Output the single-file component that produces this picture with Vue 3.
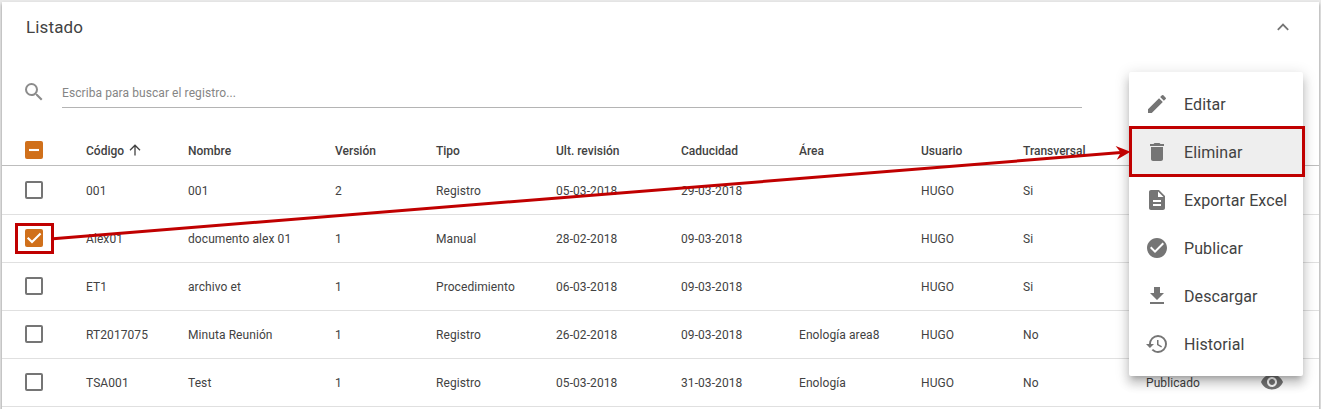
<script setup>
const columns = ['Código', 'Nombre', 'Versión', 'Tipo', 'Ult. revisión', 'Caducidad', 'Área', 'Usuario', 'Transversal', '']

const rows = [
  { checked: false, cells: ['001', '001', '2', 'Registro', '05-03-2018', '29-03-2018', '', 'HUGO', 'Si', ''] },
  { checked: true, cells: ['Alex01', 'documento alex 01', '1', 'Manual', '28-02-2018', '09-03-2018', '', 'HUGO', 'Si', ''] },
  { checked: false, cells: ['ET1', 'archivo et', '1', 'Procedimiento', '06-03-2018', '09-03-2018', '', 'HUGO', 'Si', ''] },
  { checked: false, cells: ['RT2017075', 'Minuta Reunión', '1', 'Registro', '26-02-2018', '09-03-2018', 'Enología area8', 'HUGO', 'No', ''] },
  { checked: false, cells: ['TSA001', 'Test', '1', 'Registro', '05-03-2018', '31-03-2018', 'Enología', 'HUGO', 'No', 'Publicado'] },
]

const menu = [
  { label: 'Editar', path: 'M3 17.25V21h3.75L17.81 9.94l-3.75-3.75L3 17.25zM20.71 7.04a1 1 0 0 0 0-1.41l-2.34-2.34a1 1 0 0 0-1.41 0l-1.83 1.83 3.75 3.75 1.83-1.83z' },
  { label: 'Eliminar', active: true, path: 'M6 19c0 1.1.9 2 2 2h8c1.1 0 2-.9 2-2V7H6v12zM19 4h-3.5l-1-1h-5l-1 1H5v2h14V4z' },
  { label: 'Exportar Excel', path: 'M14 2H6c-1.1 0-1.99.9-1.99 2L4 20c0 1.1.89 2 1.99 2H18c1.1 0 2-.9 2-2V8l-6-6zm2 16H8v-2h8v2zm0-4H8v-2h8v2zm-3-5V3.500L18.500 9H13z' },
  { label: 'Publicar', path: 'M12 2C6.480 2 2 6.480 2 12s4.480 10 10 10 10-4.480 10-10S17.520 2 12 2zm-2 15l-5-5 1.410-1.410L10 14.170l7.590-7.590L19 8l-9 9z' },
  { label: 'Descargar', path: 'M19 9h-4V3H9v6H5l7 7 7-7zM5 18v2h14v-2H5z' },
  { label: 'Historial', path: 'M13 3a9 9 0 0 0-9 9H1l3.890 3.890.07.14L9 12H6c0-3.870 3.130-7 7-7s7 3.130 7 7-3.130 7-7 7c-1.930 0-3.680-.79-4.940-2.060l-1.420 1.420A8.954 8.954 0 0 0 13 21a9 9 0 0 0 0-18zm-1 5v5l4.280 2.540.72-1.210-3.500-2.080V8H12z' },
]
</script>

<template>
  <div class="page">
    <section class="card">
      <header class="title-bar">
        <h1>Listado</h1>
        <svg class="chevron" viewBox="0 0 12 8"><path d="M.8 6.800 6 1.600l5.200 5.200" /></svg>
      </header>

      <div class="search">
        <svg class="icon search-icon" viewBox="0 0 24 24"><path d="M15.500 14h-.79l-.28-.27A6.471 6.471 0 0 0 16 9.500 6.500 6.500 0 1 0 9.500 16c1.610 0 3.090-.59 4.230-1.570l.27.28v.79l5 4.990L20.490 19l-4.990-5zm-6 0C7.010 14 5 11.990 5 9.500S7.010 5 9.500 5 14 7.010 14 9.500 11.990 14 9.500 14z" /></svg>
        <div class="search-field">Escriba para buscar el registro...</div>
      </div>

      <div class="table">
        <div class="row head">
          <div class="box-cell"><span class="box filled"><svg viewBox="0 0 18 18"><path d="M4 9h10" /></svg></span></div>
          <div v-for="(name, i) in columns" :key="i" class="cell">
            {{ name }}
            <svg v-if="i === 0" class="sort" viewBox="0 0 12 12"><path d="M6 11.500V1.200M1 6.200l5-5 5 5" /></svg>
          </div>
        </div>
        <div v-for="row in rows" :key="row.cells[0]" class="row">
          <div class="box-cell">
            <span class="box" :class="{ filled: row.checked }">
              <svg v-if="row.checked" viewBox="0 0 18 18"><path d="M2.700 8.800 7 13.100l8.600-8.600" /></svg>
            </span>
          </div>
          <div v-for="(value, i) in row.cells" :key="i" class="cell">{{ value }}</div>
          <svg class="icon eye" viewBox="0 0 24 24"><path d="M12 4.500C7 4.500 2.730 7.610 1 12c1.730 4.390 6 7.500 11 7.500s9.270-3.110 11-7.500c-1.730-4.390-6-7.500-11-7.500zM12 17c-2.760 0-5-2.240-5-5s2.240-5 5-5 5 2.240 5 5-2.240 5-5 5zm0-8c-1.660 0-3 1.340-3 3s1.340 3 3 3 3-1.340 3-3-1.340-3-3-3z" /></svg>
        </div>
      </div>
    </section>

    <nav class="menu">
      <div v-for="item in menu" :key="item.label" class="menu-item" :class="{ active: item.active }">
        <svg class="icon" viewBox="0 0 24 24"><path :d="item.path" /></svg>
        <span>{{ item.label }}</span>
      </div>
    </nav>

    <div class="mark mark-check"></div>
    <div class="mark mark-delete"></div>
    <svg class="arrow" viewBox="0 0 1321 409">
      <path class="shaft" d="M53 238.700 1121 152.600" />
      <path class="tip" d="M1130.500 151.800 1116.800 159.800 1120.800 152.600 1115.600 146z" />
    </svg>
  </div>
</template>

<style>
body {
  margin: 0;
}
</style>

<style scoped>
.page {
  position: relative;
  box-sizing: border-box;
  width: 1321px;
  height: 409px;
  padding: 2px 2px 0;
  overflow: hidden;
  background: #e9e9e9;
  color: #424242;
  font-family: Roboto, "Liberation Sans", sans-serif;
}
.card {
  height: 420px;
  background: #fff;
  box-shadow: 0 2px 3px rgba(0, 0, 0, 0.4);
}
.title-bar {
  display: flex;
  align-items: center;
  justify-content: space-between;
  height: 50px;
  padding: 0 30px 0 24px;
}
h1 {
  margin: 0;
  font-size: 17px;
  font-weight: 400;
  letter-spacing: 0.15px;
}
.chevron {
  width: 12px;
  height: 8px;
  fill: none;
  stroke: #757575;
  stroke-width: 1.8;
}
.icon {
  display: block;
  width: 24px;
  height: 24px;
  fill: #757575;
}
.search {
  display: flex;
  align-items: flex-end;
  height: 56px;
  padding-left: 20px;
}
.search-icon {
  margin-bottom: 4px;
  fill: #8c8c8c;
}
.search-field {
  width: 1020px;
  height: 28px;
  margin-left: 16px;
  border-bottom: 1px solid #b4b4b4;
  color: #858585;
  font-size: 12px;
  letter-spacing: 0.08px;
  line-height: 28px;
}
.table {
  padding-top: 27px;
}
.row {
  display: grid;
  grid-template-columns: 84px 102px 147px 101px 120px 125px 118px 122px 102px 123px 114px 1fr;
  align-items: center;
  box-sizing: border-box;
  height: 48px;
  border-bottom: 1px solid #e0e0e0;
  font-size: 12px;
  letter-spacing: 0.08px;
}
.head {
  height: 31px;
  border-bottom-color: #bdbdbd;
  font-weight: 500;
  letter-spacing: 0;
}
.head .cell {
  padding-top: 2px;
}
.head + .row {
  height: 49px;
}
.cell {
  padding-top: 1px;
  white-space: nowrap;
}
.box-cell {
  padding: 0 0 1px 23px;
}
.head .box-cell,
.head + .row .box-cell {
  padding-bottom: 0;
}
.box {
  display: block;
  box-sizing: border-box;
  width: 18px;
  height: 18px;
  border: 2px solid #757575;
  border-radius: 2px;
}
.box.filled {
  border: 0;
  background: #d0701b;
}
.box svg {
  display: block;
  fill: none;
  stroke: #fff;
  stroke-width: 2.1;
}
.eye {
  margin-bottom: 1px;
}
.sort {
  width: 12px;
  height: 12px;
  margin-left: 2px;
  vertical-align: -1px;
  fill: none;
  stroke: #424242;
  stroke-width: 1.3;
}
.menu {
  position: absolute;
  top: 72px;
  left: 1129px;
  box-sizing: border-box;
  width: 174px;
  height: 304px;
  padding: 8px 0;
  border-radius: 2px;
  background: #fff;
  box-shadow: 0 5px 5px -3px rgba(0, 0, 0, 0.2), 0 8px 10px 1px rgba(0, 0, 0, 0.14), 0 3px 14px 2px rgba(0, 0, 0, 0.12);
}
.menu-item {
  display: flex;
  align-items: center;
  height: 48px;
  padding-left: 16px;
  font-size: 16px;
  letter-spacing: 0.1px;
  white-space: nowrap;
}
.menu-item span {
  margin-left: 15px;
}
.menu-item.active {
  background: #eee;
}
.mark {
  position: absolute;
  box-sizing: border-box;
  border: 3px solid #c00000;
}
.mark-check {
  top: 223px;
  left: 15px;
  width: 39px;
  height: 31px;
}
.mark-delete {
  top: 126px;
  left: 1129px;
  width: 176px;
  height: 51px;
}
.arrow {
  position: absolute;
  top: 0;
  left: 0;
  width: 1321px;
  height: 409px;
}
.shaft {
  stroke: #c00000;
  stroke-width: 3;
}
.tip {
  fill: #c00000;
}
</style>
